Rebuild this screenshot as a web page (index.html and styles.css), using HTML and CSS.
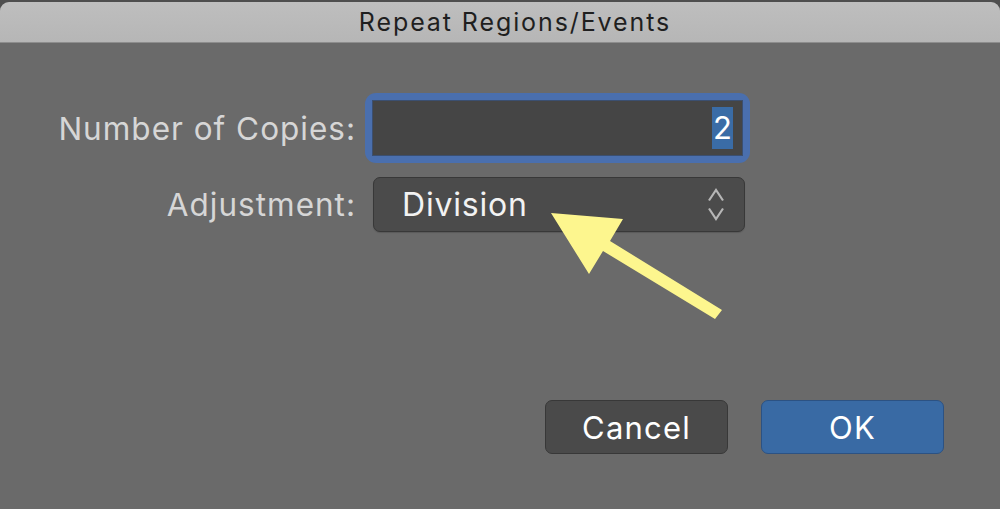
FILE: index.html
```html
<!DOCTYPE html>
<html>
<head>
<meta charset="utf-8">
<link rel="stylesheet" href="styles.css">
</head>
<body>
<div class="window">
  <div class="titlebar">Repeat Regions/Events</div>
  <div class="content">
    <div class="form">
      <div class="label label-copies">Number of Copies:</div>
      <div class="ring">
        <div class="field"><span class="selected">2</span></div>
      </div>
      <div class="label label-adjust">Adjustment:</div>
      <div class="popup">
        <span class="popup-text">Division</span>
        <svg class="chevrons" width="16" height="34" viewBox="0 0 16 34">
          <path d="M1 12.5 L8 2 L15 12.5" fill="none" stroke="#b6b6b6" stroke-width="2.2"/>
          <path d="M1 20.5 L8 31 L15 20.5" fill="none" stroke="#b6b6b6" stroke-width="2.2"/>
        </svg>
      </div>
    </div>
    <div class="buttons">
      <div class="btn btn-cancel">Cancel</div>
      <div class="btn btn-ok">OK</div>
    </div>
  </div>
  <svg class="arrow" width="1000" height="509" viewBox="0 0 1000 509">
    <polygon points="551,213 623,219 610,241 722,310 715,319 603,251 589,274" fill="#fdf68e"/>
  </svg>
</div>
</body>
</html>
```

FILE: styles.css
```css
html, body {
  margin: 0;
  padding: 0;
  background: #4e4e4e;
}
body {
  width: 1000px;
  height: 509px;
  overflow: hidden;
  font-family: "Inter", "Liberation Sans", sans-serif;
}
.window {
  position: relative;
  width: 1000px;
  height: 507px;
  margin-top: 2px;
  background: #6a6a6a;
  border-radius: 9px 9px 0 0;
  overflow: hidden;
}
.titlebar {
  height: 41px;
  box-sizing: border-box;
  background: linear-gradient(#bebebe, #b6b6b6);
  border-bottom: 1px solid #8d8d8d;
  color: #1f1f1f;
  font-size: 25px;
  letter-spacing: 1.9px;
  line-height: 40px;
  text-align: center;
  padding-left: 30px;
}
.content {
  display: flex;
  flex-direction: column;
}
.form {
  display: grid;
  grid-template-columns: 355px 385px;
  grid-template-rows: 70px 55px;
  column-gap: 10px;
  row-gap: 14px;
  padding-top: 50px;
}
.label {
  color: #d6d6d6;
  font-size: 31.5px;
  letter-spacing: 1px;
  text-align: right;
  align-self: center;
  line-height: 1;
  margin-right: -1px;
}
.label-copies {
  margin-top: 2px;
}
.ring {
  background: #4a6fae;
  border-radius: 11px;
  padding: 7px;
  box-sizing: border-box;
  height: 70px;
}
.field {
  height: 100%;
  background: #454545;
  border: 1px solid #3b4f70;
  box-sizing: border-box;
  display: flex;
  justify-content: flex-end;
  align-items: center;
  padding-right: 9px;
}
.selected {
  background: #3a6ca6;
  color: #ffffff;
  font-size: 31px;
  line-height: 42px;
  padding: 0 1px;
}
.popup {
  margin-left: 8px;
  width: 372px;
  height: 55px;
  box-sizing: border-box;
  background: #4b4b4b;
  border: 1px solid #383838;
  border-radius: 7px;
  box-shadow: 0 1px 1px rgba(0,0,0,0.15);
  display: flex;
  align-items: center;
  justify-content: space-between;
  padding: 0 20px 0 28px;
}
.popup-text {
  color: #f2f2f2;
  font-size: 32px;
  letter-spacing: 0.8px;
}
.chevrons {
  display: block;
}
.buttons {
  display: flex;
  justify-content: flex-end;
  gap: 33px;
  padding-right: 56px;
  margin-top: 168px;
}
.btn {
  width: 183px;
  height: 54px;
  box-sizing: border-box;
  border-radius: 7px;
  color: #ffffff;
  font-size: 31px;
  letter-spacing: 1.2px;
  display: flex;
  align-items: center;
  justify-content: center;
}
.btn-cancel {
  background: #4a4a4a;
  border: 1px solid #383838;
}
.btn-ok {
  background: #396aa4;
  border: 1px solid #2c5283;
}
.arrow {
  position: absolute;
  left: 0;
  top: -2px;
  pointer-events: none;
}
```
